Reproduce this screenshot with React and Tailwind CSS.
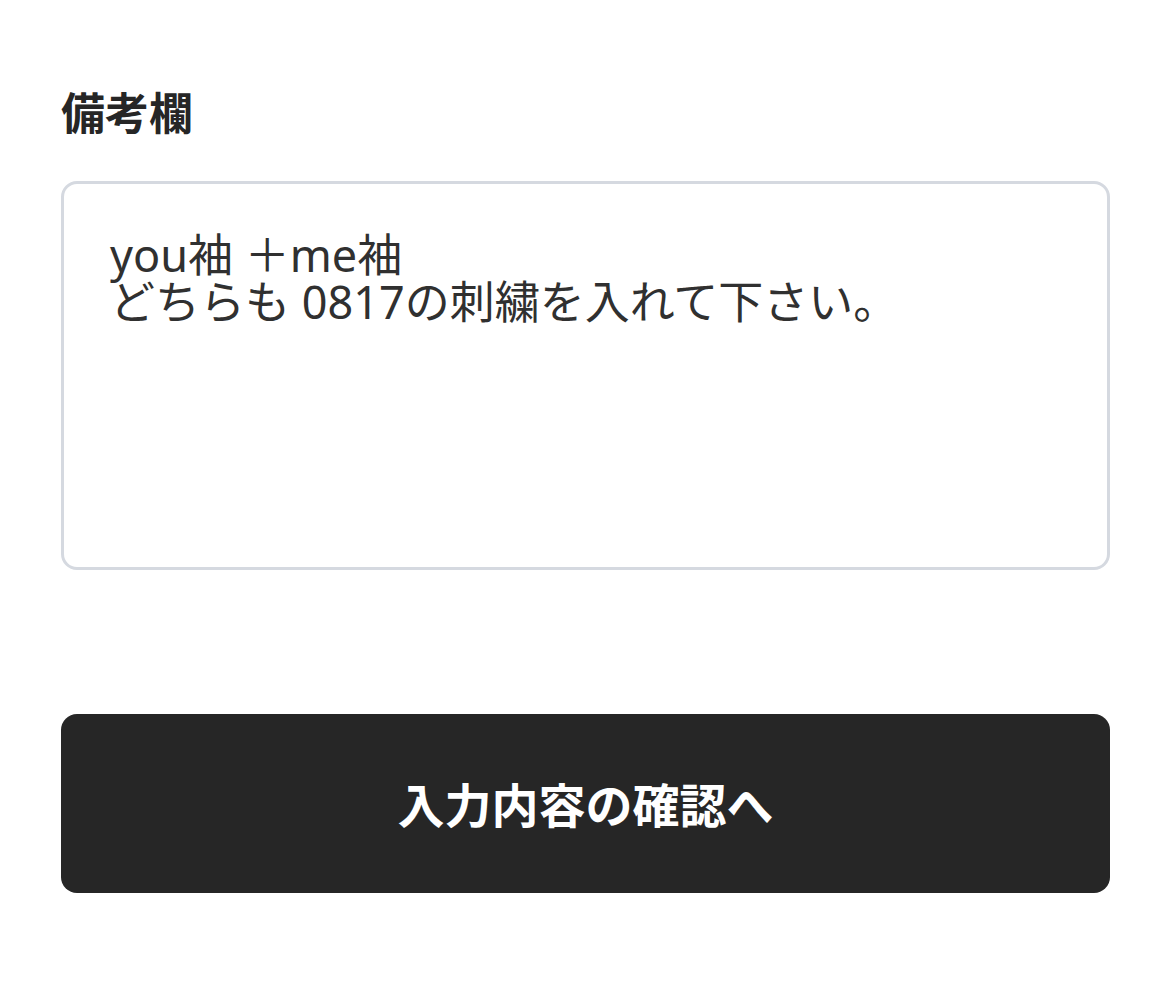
export default function App() {
  return (
    <div
      className="min-h-screen bg-white pl-[61px] pr-[46px] pt-[84px]"
      style={{ fontFamily: '"Noto Sans CJK JP", "Noto Sans", sans-serif' }}
    >
      <label className="block text-[44px] font-bold leading-[54px] text-[#262626]">備考欄</label>

      <div
        className="mt-[43px] h-[389px] rounded-[16px] border-[3px] border-[#d5d9e0] px-[46px] pt-[47px] text-[45px] leading-[47px] text-[#303030] whitespace-pre-wrap"
        style={{ fontFamily: '"Noto Sans", "Noto Sans CJK JP", sans-serif' }}
      >
        {'you袖 ＋me袖\nどちらも 0817の刺繍を入れて下さい。'}
      </div>

      <button className="mt-[144px] flex h-[179px] w-full items-center justify-center rounded-[16px] bg-[#262626] text-[47px] font-bold text-white">
        入力内容の確認へ
      </button>
    </div>
  );
}
